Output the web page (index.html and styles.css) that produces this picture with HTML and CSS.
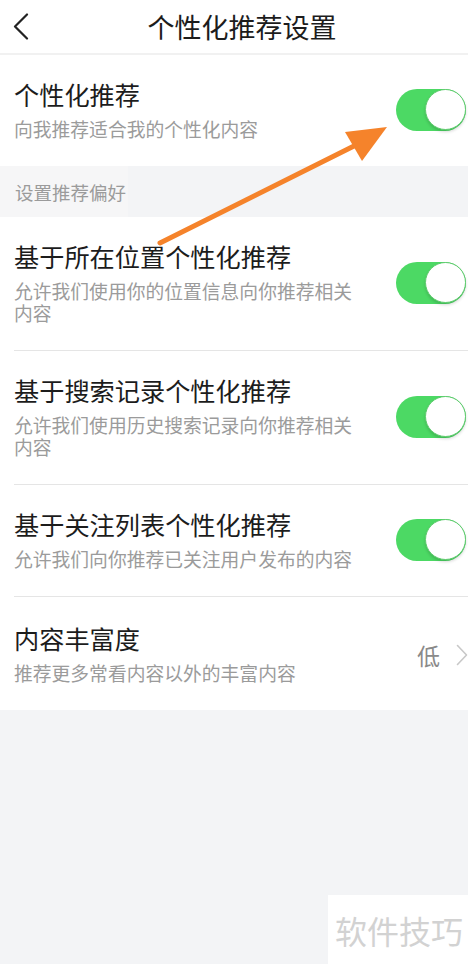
FILE: index.html
```html
<!DOCTYPE html>
<html lang="zh-CN">
<head>
<meta charset="utf-8">
<title>个性化推荐设置</title>
<link rel="stylesheet" href="styles.css">
</head>
<body>
<div class="page">
  <header class="header">
    <div class="back">
      <svg width="18" height="27" viewBox="0 0 18 27"><path d="M15 1.5 L3 13.5 L15 25.5" fill="none" stroke="#222" stroke-width="2.2" stroke-linecap="round" stroke-linejoin="round"/></svg>
    </div>
    <h1 class="title">个性化推荐设置</h1>
    <div></div>
  </header>

  <section class="group">
    <div class="row">
      <div class="text">
        <div class="row-title">个性化推荐</div>
        <div class="row-sub">向我推荐适合我的个性化内容</div>
      </div>
      <div class="toggle"><span class="knob"></span></div>
    </div>
  </section>

  <div class="band"><span class="band-label">设置推荐偏好</span></div>

  <section class="group">
    <div class="row bordered">
      <div class="text">
        <div class="row-title">基于所在位置个性化推荐</div>
        <div class="row-sub">允许我们使用你的位置信息向你推荐相关内容</div>
      </div>
      <div class="toggle"><span class="knob"></span></div>
    </div>
    <div class="row bordered">
      <div class="text">
        <div class="row-title">基于搜索记录个性化推荐</div>
        <div class="row-sub">允许我们使用历史搜索记录向你推荐相关内容</div>
      </div>
      <div class="toggle"><span class="knob"></span></div>
    </div>
    <div class="row bordered">
      <div class="text">
        <div class="row-title">基于关注列表个性化推荐</div>
        <div class="row-sub">允许我们向你推荐已关注用户发布的内容</div>
      </div>
      <div class="toggle"><span class="knob"></span></div>
    </div>
    <div class="row last">
      <div class="text">
        <div class="row-title">内容丰富度</div>
        <div class="row-sub">推荐更多常看内容以外的丰富内容</div>
      </div>
      <div class="value">
        <span class="value-text">低</span>
        <svg class="chev" width="12" height="22" viewBox="0 0 12 22"><path d="M1.5 1.5 L10.5 11 L1.5 20.5" fill="none" stroke="#c8c8c8" stroke-width="1.6" stroke-linecap="round" stroke-linejoin="round"/></svg>
      </div>
    </div>
  </section>

  <svg class="arrow" width="468" height="964" viewBox="0 0 468 964">
    <line x1="160" y1="243" x2="356" y2="145" stroke="#f5832b" stroke-width="5" stroke-linecap="round"/>
    <polygon points="387,127 345,132 362,161" fill="#f5832b"/>
  </svg>

  <div class="watermark">软件技巧</div>
</div>
</body>
</html>
```

FILE: styles.css
```css
* { box-sizing: border-box; }
html, body {
  margin: 0;
  padding: 0;
}
body {
  background: #f3f4f6;
  font-family: "Noto Sans CJK SC", "Noto Sans", sans-serif;
  width: 468px;
  min-height: 964px;
}
.page {
  position: relative;
  width: 468px;
  min-height: 964px;
}
.header {
  height: 55px;
  background: #fff;
  border-bottom: 2px solid #f1f1f1;
  display: grid;
  grid-template-columns: 60px 1fr 44px;
  align-items: center;
}
.back {
  padding-left: 12px;
  display: flex;
  align-items: center;
  height: 100%;
}
.title {
  margin: 0;
  font-size: 27px;
  font-weight: 400;
  color: #1c1c1c;
  text-align: center;
  line-height: 34px;
}
.group {
  background: #fff;
}
.row {
  display: flex;
  align-items: center;
  margin-left: 14px;
  padding: 24px 2px 26px 0;
}
.row.bordered {
  border-bottom: 1px solid #e5e5e5;
}
.row.last {
  padding-right: 0;
  padding-top: 26px;
  padding-bottom: 26px;
}
.text {
  flex: 0 0 345px;
  display: flex;
  flex-direction: column;
  gap: 9px;
}
.row-title {
  font-size: 25.2px;
  line-height: 30px;
  color: #1c1c1c;
}
.row-sub {
  font-size: 18.8px;
  line-height: 22px;
  color: #9b9b9b;
}
.toggle {
  margin-left: auto;
  width: 70px;
  height: 42px;
  border-radius: 21px;
  background: #4cd964;
  display: flex;
  align-items: center;
  justify-content: flex-end;
}
.knob {
  width: 41px;
  height: 41px;
  border-radius: 50%;
  background: #fff;
  border: 1px solid #5ecb6d;
  box-shadow: 0 2px 3px rgba(0,0,0,0.15);
}
.value {
  margin-left: auto;
  display: flex;
  align-items: center;
  gap: 16px;
  padding-top: 2px;
}
.value-text {
  font-size: 23px;
  line-height: 30px;
  color: #8a8a8a;
}
.chev { display: block; }
.band {
  height: 51px;
  display: flex;
  align-items: stretch;
}
.band-label {
  display: flex;
  align-items: center;
  width: 128px;
  padding-left: 15px;
  padding-top: 1px;
  background: #f6f6f7;
  font-size: 18.5px;
  color: #9b9b9b;
}
.arrow {
  position: absolute;
  left: 0;
  top: 0;
  pointer-events: none;
}
.watermark {
  position: absolute;
  left: 328px;
  top: 895px;
  width: 140px;
  height: 69px;
  background: #fff;
  color: #d2d2d2;
  font-size: 32px;
  display: flex;
  align-items: center;
  justify-content: center;
  padding-left: 2px;
}
```
